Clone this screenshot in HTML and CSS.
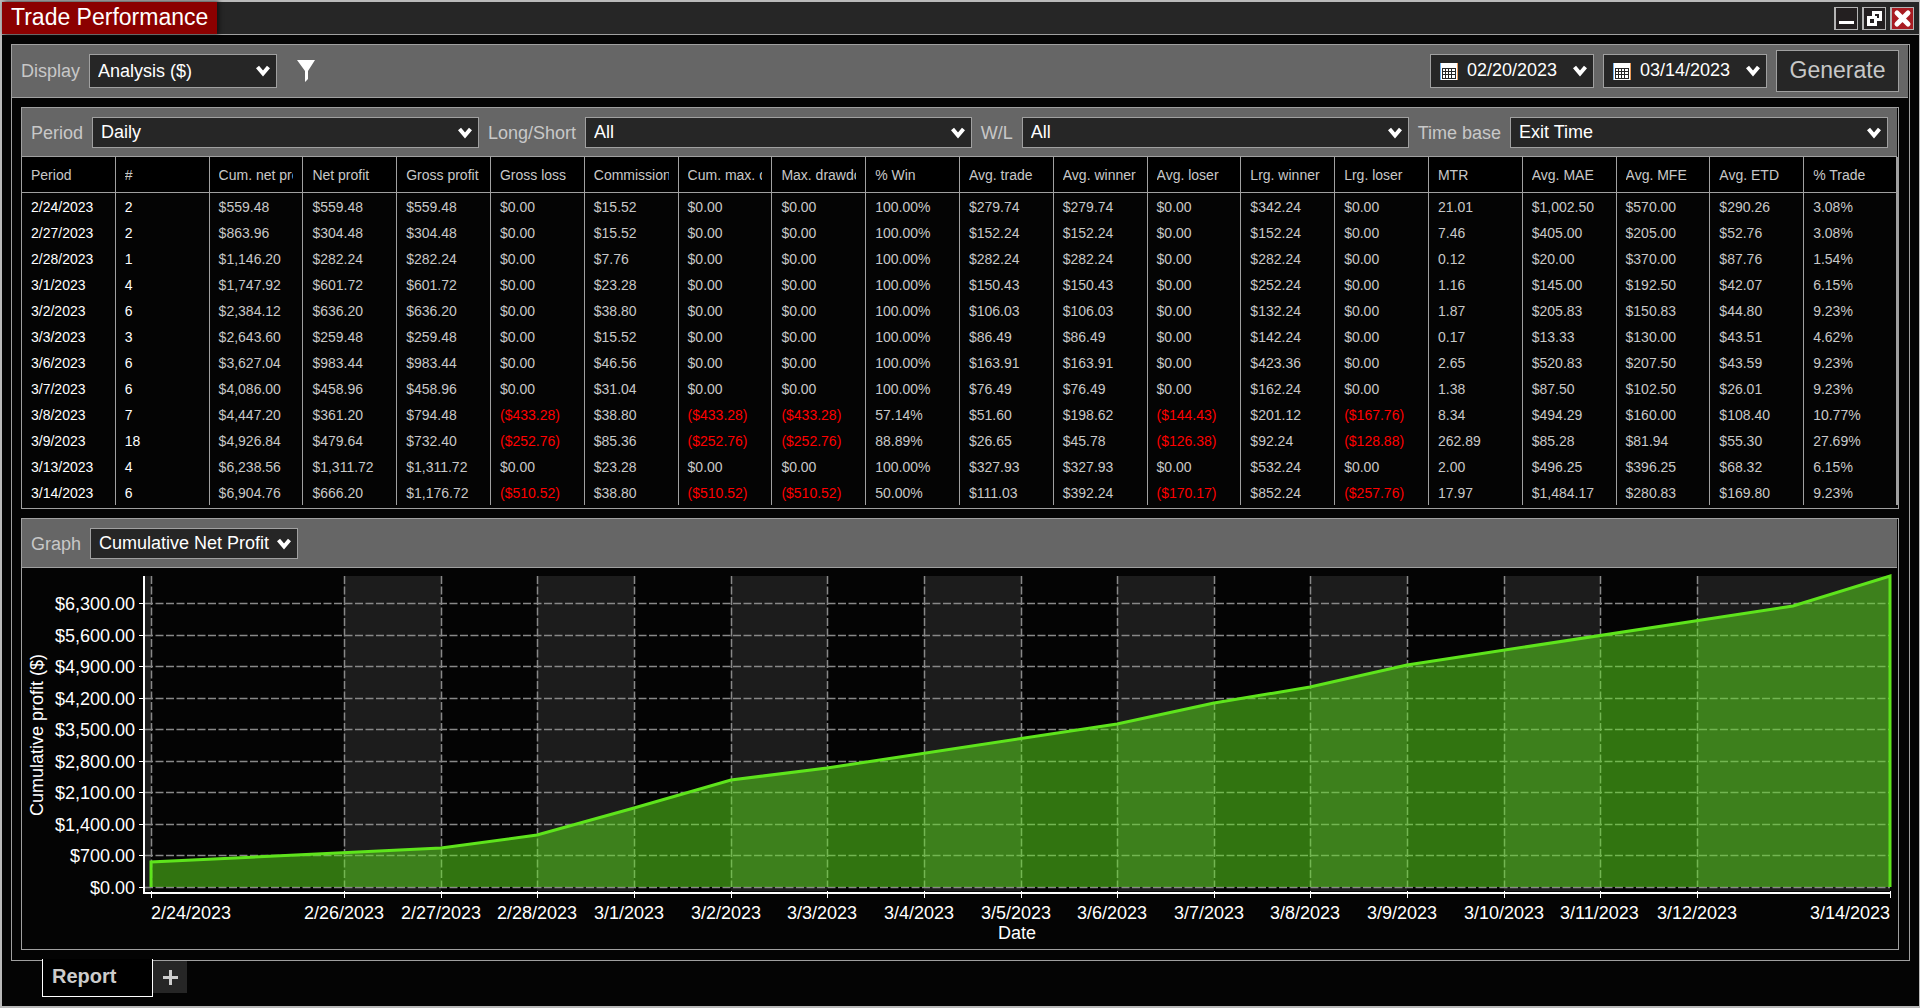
FILE: index.html
```html
<!DOCTYPE html>
<html lang="en">
<head>
    <meta charset="UTF-8">
    <meta name="viewport" content="width=device-width, initial-scale=1.0">
    <title>Trade Performance</title>
    <link rel="stylesheet" href="styles.css">
</head>

<body>
    <div class="window">
        <!-- Title bar -->
        <header class="title-bar">
            <h1 class="title">Trade Performance</h1>
            <div class="window-buttons">
                <button class="window-btn" aria-label="Minimize">
                    <svg width="21" height="21" viewBox="0 0 21 21"><path d="M3 13h15v3H3z" fill="#fff"/></svg>
                </button>
                <button class="window-btn" aria-label="Restore">
                    <svg width="21" height="21" viewBox="0 0 21 21" fill="none" stroke="#fff" stroke-width="3"><path d="M4.500 9.500h7v7h-7z"/><path d="M9.500 8V4.500h7v7H13" /></svg>
                </button>
                <button class="window-btn close" aria-label="Close">
                    <svg width="21" height="21" viewBox="0 0 21 21"><path d="M5 5l11 11M16 5L5 16" stroke="#fff" stroke-width="5" stroke-linecap="round"/></svg>
                </button>
            </div>
        </header>

        <main class="panel">
            <!-- Report settings -->
            <div class="toolbar main-toolbar">
                <label for="display">Display</label>
                <select id="display" class="display-select">
                    <option>Analysis ($)</option>
                </select>
                <button class="filter-btn" aria-label="Filter">
                    <svg width="18" height="22" viewBox="0 0 18 22"><path d="M0 0h18l-7 11v8l-3 3V11z" fill="#fff"/></svg>
                </button>
                <div class="date-picker push-right">
                    <svg width="18" height="17" viewBox="0 0 18 17"><use href="#calendar"/></svg>
                    <input type="text" aria-label="Start date" value="02/20/2023">
                </div>
                <div class="date-picker">
                    <svg width="18" height="17" viewBox="0 0 18 17"><use href="#calendar"/></svg>
                    <input type="text" aria-label="End date" value="03/14/2023">
                </div>
                <button class="generate-btn">Generate</button>
            </div>

            <div class="content">
                <!-- Analysis table -->
                <section class="panel">
                    <div class="toolbar filters">
                        <label for="period">Period</label>
                        <select id="period"><option>Daily</option></select>
                        <label for="side">Long/Short</label>
                        <select id="side"><option>All</option></select>
                        <label for="winLoss">W/L</label>
                        <select id="winLoss"><option>All</option></select>
                        <label for="timeBase">Time base</label>
                        <select id="timeBase"><option>Exit Time</option></select>
                    </div>
                    <table class="report">
                        <thead><tr id="reportHead"></tr></thead>
                        <tbody id="reportBody"></tbody>
                    </table>
                </section>

                <!-- Graph -->
                <section class="panel graph-panel">
                    <div class="toolbar">
                        <label for="graph">Graph</label>
                        <select id="graph" class="graph-select"><option>Cumulative Net Profit</option></select>
                    </div>
                    <svg id="chart" class="chart" viewBox="0 0 1876 381" role="img" aria-label="Cumulative net profit by date"></svg>
                </section>
            </div>
        </main>

        <!-- Tabs -->
        <nav class="tabs">
            <button class="tab">Report</button>
            <button class="add-tab" aria-label="Add tab">
                <svg width="15" height="15" viewBox="0 0 15 15"><path d="M6 0h3v6h6v3H9v6H6V9H0V6h6z" fill="#ccc"/></svg>
            </button>
        </nav>
    </div>

    <svg class="icon-defs" width="0" height="0">
        <symbol id="calendar" viewBox="0 0 18 17">
            <path d="M0 0h18v17H0z" fill="#fff"/>
            <path d="M0 0h1v17H0z" fill="#6fb1ee"/>
            <path d="M17 0h1v17h-1z" fill="#ec9a55"/>
            <path d="M2 5h14v11H2z" fill="#262626"/>
            <path d="M3 6h12v9H3z" fill="#fff"/>
            <path d="M5.500 6v9M8.500 6v9M11.500 6v9M3 8.500h12M3 11.500h12" stroke="#262626"/>
        </symbol>
    </svg>

    <script src="script.js"></script>
</body>
</html>
```
FILE: styles.css
```css
* {
    box-sizing: border-box;
}

body {
    margin: 0;
    font-family: "Liberation Sans", Arial, sans-serif;
    font-size: 18px;
    color: #fff;
    background-color: #040404;
}

button,
select,
input {
    font-family: inherit;
    font-size: inherit;
    border-radius: 0;
}

button {
    padding: 0;
    cursor: pointer;
}

svg {
    display: block;
}

.window {
    display: flex;
    flex-direction: column;
    min-height: 100vh;
    border: 2px solid #bababa;
    border-right-width: 1px;
}

/* Title bar */
.title-bar {
    display: flex;
    justify-content: space-between;
    height: 33px;
    background-color: #262626;
    border-bottom: 1px solid #a0a0a0;
}

.title {
    margin: 0;
    padding: 0 9px;
    font-size: 23px;
    font-weight: normal;
    line-height: 30px;
    background-color: #8b0000;
    box-shadow: 2px 0 4px #111;
}

.window-buttons {
    display: flex;
    gap: 4px;
    padding: 5px 5px 0 0;
}

.window-btn {
    width: 24px;
    height: 23px;
    background-color: #231f20;
    border: 1px solid #b4b4b4;
    border-left-width: 2px;
}

.window-btn.close {
    background-color: #a81c22;
}

/* Panels and toolbars */
.panel {
    display: flex;
    flex-direction: column;
    border: 1px solid #a0a0a0;
}

main.panel {
    flex: 1;
    margin: 9px 9px 0;
}

.content {
    display: flex;
    flex: 1;
    flex-direction: column;
    gap: 9px;
    padding: 9px 10px 10px 9px;
}

.toolbar {
    display: flex;
    align-items: center;
    gap: 9px;
    margin-right: 1px;
    padding: 9px 9px 8px;
    background-color: #666;
    border-bottom: 1px solid #a0a0a0;
}

.main-toolbar {
    height: 53px;
    padding: 0 9px;
}

.filters {
    display: grid;
    grid-template-columns: auto 43fr auto 43fr auto 43fr auto 42fr;
}

.toolbar label {
    padding-top: 1px;
    color: #c8c8c8;
}

select,
.date-picker {
    height: 31px;
    padding: 0 26px 1px 8px;
    color: #fff;
    background: #262626 url("data:image/svg+xml,%3Csvg xmlns='http://www.w3.org/2000/svg' width='14' height='12'%3E%3Cpath d='M1.500 2L7 8.500L12.500 2' fill='none' stroke='white' stroke-width='4'/%3E%3C/svg%3E") no-repeat right 6px center;
    border: 1px solid #a0a0a0;
    appearance: none;
}

.filters select {
    min-width: 0;
}

.display-select,
.date-picker {
    height: 34px;
    background-position-x: right 8px;
}

.display-select {
    width: 188px;
}

.graph-select {
    width: 208px;
}

.filter-btn {
    margin-left: 11px;
    background: none;
    border: none;
}

.push-right {
    margin-left: auto;
}

.date-picker {
    display: flex;
    align-items: center;
    gap: 9px;
    width: 164px;
    padding: 0 26px 0 9px;
}

.date-picker input {
    width: 92px;
    padding: 0 0 2px;
    color: #fff;
    background: none;
    border: none;
}

.generate-btn {
    width: 123px;
    height: 42px;
    padding-bottom: 2px;
    font-size: 23px;
    color: #c8c8c8;
    background-color: #262626;
    border: 1px solid #a0a0a0;
}

/* Report table */
.report {
    width: 100%;
    margin-bottom: 3px;
    table-layout: fixed;
    border-spacing: 0;
    font-size: 14px;
    color: #c8c8c8;
}

.report th,
.report td {
    height: 26px;
    padding: 1px 9px 0;
    text-align: left;
    white-space: nowrap;
    border-right: 1px solid #a0a0a0;
}

.report th {
    height: 36px;
    padding-top: 0;
    font-weight: normal;
    background-color: #000;
    border-bottom: 1px solid #a0a0a0;
}

.column-name {
    display: block;
    overflow: hidden;
}

.report th:last-child,
.report td:last-child {
    border-right-width: 2px;
}

.report td:nth-child(-n+2) {
    color: #fff;
}

.report .loss {
    color: #f00;
}

/* Graph */
.graph-panel {
    flex: 1;
}

.chart {
    width: 100%;
    fill: #fff;
}

.chart .band {
    fill: #1c1c1c;
}

.chart .grid {
    stroke: #888;
    stroke-width: 1.5;
    stroke-dasharray: 8 2.5;
}

.chart .axis {
    stroke: #fff;
}

.chart .area {
    fill: #5ee41c;
    fill-opacity: 0.5;
}

.chart .profit {
    fill: none;
    stroke: #5ee41c;
    stroke-width: 3;
}

.chart .end {
    text-anchor: end;
}

.chart .middle {
    text-anchor: middle;
}

/* Tabs */
.tabs {
    display: flex;
    align-items: flex-start;
    height: 45px;
    padding-left: 40px;
}

.tab {
    position: relative;
    width: 111px;
    height: 38px;
    margin-top: -2px;
    padding: 0 0 2px 9px;
    font-size: 20px;
    font-weight: bold;
    text-align: left;
    color: #ccc;
    background-color: #000;
    border: 1px solid #fff;
    border-top: none;
}

.add-tab {
    display: grid;
    place-items: center;
    width: 34px;
    height: 32px;
    background-color: #262626;
    border: none;
}

.icon-defs {
    position: absolute;
}
```
FILE: script.js
```js
var columns = ['Period', '#', 'Cum. net profit', 'Net profit', 'Gross profit', 'Gross loss', 'Commission',
    'Cum. max. drawdown', 'Max. drawdown', '% Win', 'Avg. trade', 'Avg. winner', 'Avg. loser', 'Lrg. winner',
    'Lrg. loser', 'MTR', 'Avg. MAE', 'Avg. MFE', 'Avg. ETD', '% Trade'];

var rows = [
    '2/24/2023|2|$559.48|$559.48|$559.48|$0.00|$15.52|$0.00|$0.00|100.00%|$279.74|$279.74|$0.00|$342.24|$0.00|21.01|$1,002.50|$570.00|$290.26|3.08%',
    '2/27/2023|2|$863.96|$304.48|$304.48|$0.00|$15.52|$0.00|$0.00|100.00%|$152.24|$152.24|$0.00|$152.24|$0.00|7.46|$405.00|$205.00|$52.76|3.08%',
    '2/28/2023|1|$1,146.20|$282.24|$282.24|$0.00|$7.76|$0.00|$0.00|100.00%|$282.24|$282.24|$0.00|$282.24|$0.00|0.12|$20.00|$370.00|$87.76|1.54%',
    '3/1/2023|4|$1,747.92|$601.72|$601.72|$0.00|$23.28|$0.00|$0.00|100.00%|$150.43|$150.43|$0.00|$252.24|$0.00|1.16|$145.00|$192.50|$42.07|6.15%',
    '3/2/2023|6|$2,384.12|$636.20|$636.20|$0.00|$38.80|$0.00|$0.00|100.00%|$106.03|$106.03|$0.00|$132.24|$0.00|1.87|$205.83|$150.83|$44.80|9.23%',
    '3/3/2023|3|$2,643.60|$259.48|$259.48|$0.00|$15.52|$0.00|$0.00|100.00%|$86.49|$86.49|$0.00|$142.24|$0.00|0.17|$13.33|$130.00|$43.51|4.62%',
    '3/6/2023|6|$3,627.04|$983.44|$983.44|$0.00|$46.56|$0.00|$0.00|100.00%|$163.91|$163.91|$0.00|$423.36|$0.00|2.65|$520.83|$207.50|$43.59|9.23%',
    '3/7/2023|6|$4,086.00|$458.96|$458.96|$0.00|$31.04|$0.00|$0.00|100.00%|$76.49|$76.49|$0.00|$162.24|$0.00|1.38|$87.50|$102.50|$26.01|9.23%',
    '3/8/2023|7|$4,447.20|$361.20|$794.48|($433.28)|$38.80|($433.28)|($433.28)|57.14%|$51.60|$198.62|($144.43)|$201.12|($167.76)|8.34|$494.29|$160.00|$108.40|10.77%',
    '3/9/2023|18|$4,926.84|$479.64|$732.40|($252.76)|$85.36|($252.76)|($252.76)|88.89%|$26.65|$45.78|($126.38)|$92.24|($128.88)|262.89|$85.28|$81.94|$55.30|27.69%',
    '3/13/2023|4|$6,238.56|$1,311.72|$1,311.72|$0.00|$23.28|$0.00|$0.00|100.00%|$327.93|$327.93|$0.00|$532.24|$0.00|2.00|$496.25|$396.25|$68.32|6.15%',
    '3/14/2023|6|$6,904.76|$666.20|$1,176.72|($510.52)|$38.80|($510.52)|($510.52)|50.00%|$111.03|$392.24|($170.17)|$852.24|($257.76)|17.97|$1,484.17|$280.83|$169.80|9.23%'
].map(function (row) { return row.split('|'); });

function fillTable() {
    document.getElementById('reportHead').innerHTML = columns.map(function (name) {
        return '<th scope="col"><span class="column-name">' + name + '</span></th>';
    }).join('');

    document.getElementById('reportBody').innerHTML = rows.map(function (row) {
        return '<tr>' + row.map(function (value) {
            return '<td' + (value[0] === '(' ? ' class="loss"' : '') + '>' + value + '</td>';
        }).join('') + '</tr>';
    }).join('');
}

// Plot area inside the chart's viewBox
var left = 129, right = 1868, top0 = 8, zero = 319, maxProfit = 6904.76;
var firstDay = Date.UTC(2023, 1, 24), dayCount = 18;
var dateWidth = 80;

function dayOf(text) {
    var p = text.split('/');
    return (Date.UTC(p[2], p[0] - 1, p[1]) - firstDay) / 86400000;
}

function xOf(day) {
    return Math.round(left + day * (right - left) / dayCount);
}

function yOf(value) {
    return Math.round(zero - value * (zero - top0) / maxProfit);
}

function line(cls, x1, y1, x2, y2) {
    return '<path class="' + cls + '" d="M' + x1 + ' ' + y1 + 'L' + x2 + ' ' + y2 + '"/>';
}

function drawChart() {
    // The labels beside the first and last day are left out
    var days = [];
    for (var d = 0; d <= dayCount; d++) {
        if (d !== 1 && d !== 17) days.push(d);
    }

    var bands = '<rect class="band" x="122" y="8" width="7" height="315"/>';
    var grid = '', labels = '', axes = '';

    days.forEach(function (day, i) {
        var x = xOf(day);
        var date = new Date(firstDay + day * 86400000);
        var text = (date.getUTCMonth() + 1) + '/' + date.getUTCDate() + '/2023';
        // Each label starts half a full date before its tick, the outer two stay inside the plot
        var labelX = day === 0 ? x : day === dayCount ? x - dateWidth : x - dateWidth / 2;

        if (i % 2 === 1 && day < dayCount) {
            bands += '<rect class="band" x="' + x + '" y="8" width="' + (xOf(days[i + 1]) - x) + '" height="315"/>';
        }
        if (day < dayCount) grid += line('grid', x + 0.5, top0, x + 0.5, zero);
        axes += line('axis', x + 0.5, 323, x + 0.5, 330);
        labels += '<text x="' + labelX + '" y="351">' + text + '</text>';
    });

    for (var v = 0; v <= 6300; v += 700) {
        var y = yOf(v);
        grid += line('grid', 123, y + 0.5, right, y + 0.5);
        axes += line('axis', 117, y + 0.5, 121, y + 0.5);
        labels += '<text class="end" x="113" y="' + (y + 7) + '">$' + v.toLocaleString('en-US') + '.00</text>';
    }

    axes += '<path d="M121 8h2v318h-2zM121 324h1748v2H121z"/>';

    var points = 'M' + left + ' ' + zero + rows.map(function (row) {
        return 'L' + xOf(dayOf(row[0])) + ' ' + yOf(Number(row[2].replace(/[$,]/g, '')));
    }).join('') + 'L' + right + ' ' + zero;

    document.getElementById('chart').innerHTML = bands + grid +
        '<path class="area" d="' + points + 'Z"/><path class="profit" d="' + points + '"/>' + axes + labels +
        '<text class="middle" x="995" y="371">Date</text>' +
        '<text class="middle" transform="translate(21 167) rotate(-90)">Cumulative profit ($)</text>';
}

fillTable();
drawChart();
```
